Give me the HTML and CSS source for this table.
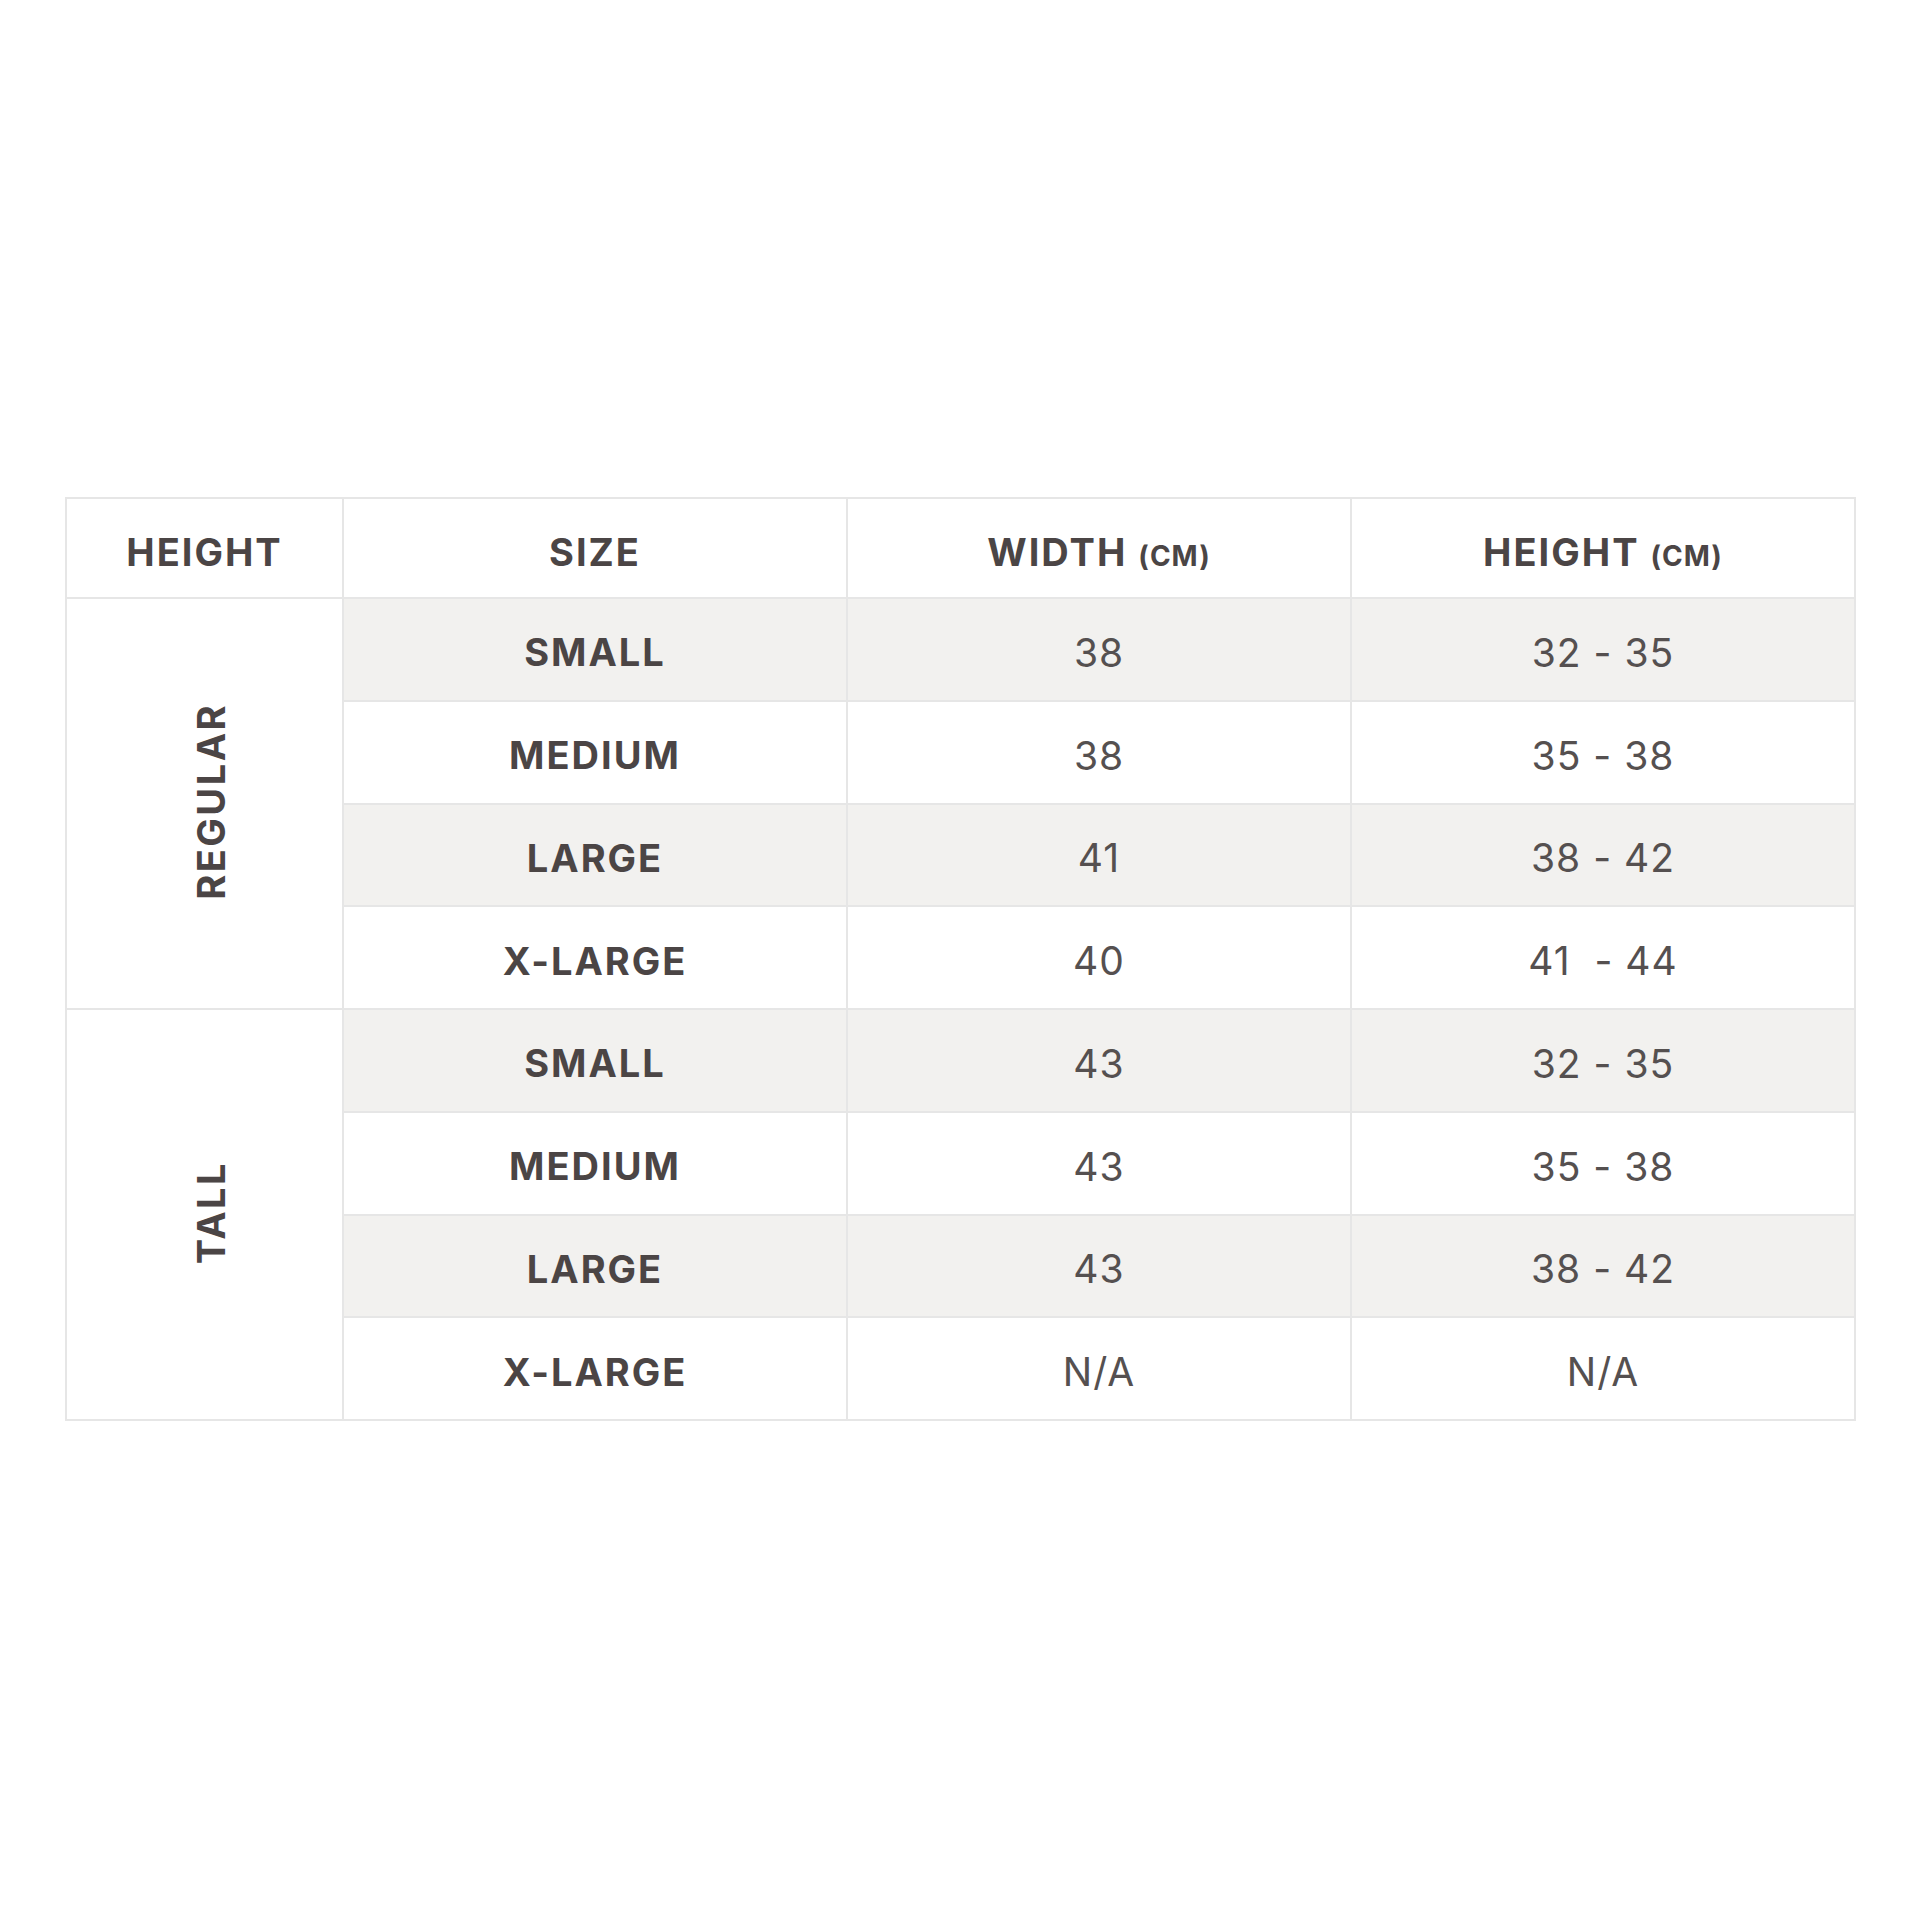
FILE: index.html
```html
<!DOCTYPE html>
<html lang="en">
<head>
<meta charset="utf-8">
<title>Size Chart</title>
<link rel="stylesheet" href="styles.css">
</head>
<body>
<main class="page">
  <table class="chart">
    <colgroup>
      <col class="c-group">
      <col class="c-size">
      <col class="c-val">
      <col class="c-val">
    </colgroup>
    <thead>
      <tr class="head-row">
        <th>HEIGHT</th>
        <th>SIZE</th>
        <th>WIDTH <span class="unit">(CM)</span></th>
        <th>HEIGHT <span class="unit">(CM)</span></th>
      </tr>
    </thead>
    <tbody>
      <tr class="row shade">
        <td class="group" rowspan="4"><span class="vert">REGULAR</span></td>
        <td class="size">SMALL</td><td class="num">38</td><td class="num">32 - 35</td>
      </tr>
      <tr class="row">
        <td class="size">MEDIUM</td><td class="num">38</td><td class="num">35 - 38</td>
      </tr>
      <tr class="row shade">
        <td class="size">LARGE</td><td class="num">41</td><td class="num">38 - 42</td>
      </tr>
      <tr class="row">
        <td class="size">X-LARGE</td><td class="num">40</td><td class="num">41 &nbsp;- 44</td>
      </tr>
      <tr class="row shade">
        <td class="group" rowspan="4"><span class="vert">TALL</span></td>
        <td class="size">SMALL</td><td class="num">43</td><td class="num">32 - 35</td>
      </tr>
      <tr class="row">
        <td class="size">MEDIUM</td><td class="num">43</td><td class="num">35 - 38</td>
      </tr>
      <tr class="row shade">
        <td class="size">LARGE</td><td class="num">43</td><td class="num">38 - 42</td>
      </tr>
      <tr class="row">
        <td class="size">X-LARGE</td><td class="num">N/A</td><td class="num">N/A</td>
      </tr>
    </tbody>
  </table>
</main>
</body>
</html>
```
FILE: styles.css
```css
html, body {
  margin: 0;
  padding: 0;
  background: #ffffff;
}

.page {
  padding: 497px 0 0 65px;
  font-family: "Inter", "Liberation Sans", sans-serif;
  color: #4b4545;
}

.chart {
  border-collapse: collapse;
  table-layout: fixed;
  width: 1791px;
  border: 2px solid #e6e6e6;
}

.c-group { width: 277px; }
.c-size { width: 504px; }
.c-val { width: 504px; }

.chart th,
.chart td {
  border: 2px solid #e6e6e6;
  padding: 0;
  text-align: center;
  vertical-align: middle;
}

.head-row {
  height: 100px;
}

.head-row th {
  font-size: 38px;
  font-weight: 700;
  letter-spacing: 2px;
  padding-top: 8px;
}

.unit {
  font-size: 28px;
  font-weight: 700;
  letter-spacing: 1px;
}

.row {
  height: 102.75px;
}

.row.shade td:not(.group) {
  background: #f2f1ef;
}

.group {
  background: #ffffff;
}

.vert {
  display: inline-block;
  writing-mode: vertical-rl;
  transform: rotate(180deg);
  font-size: 38px;
  font-weight: 700;
  letter-spacing: 2.5px;
  margin-left: 12px;
}

.size {
  font-size: 38px;
  font-weight: 700;
  letter-spacing: 2px;
  padding-top: 6px !important;
}

.num {
  font-size: 39px;
  font-weight: 400;
  letter-spacing: 1px;
  color: #555050;
  padding-top: 6px !important;
}
```
